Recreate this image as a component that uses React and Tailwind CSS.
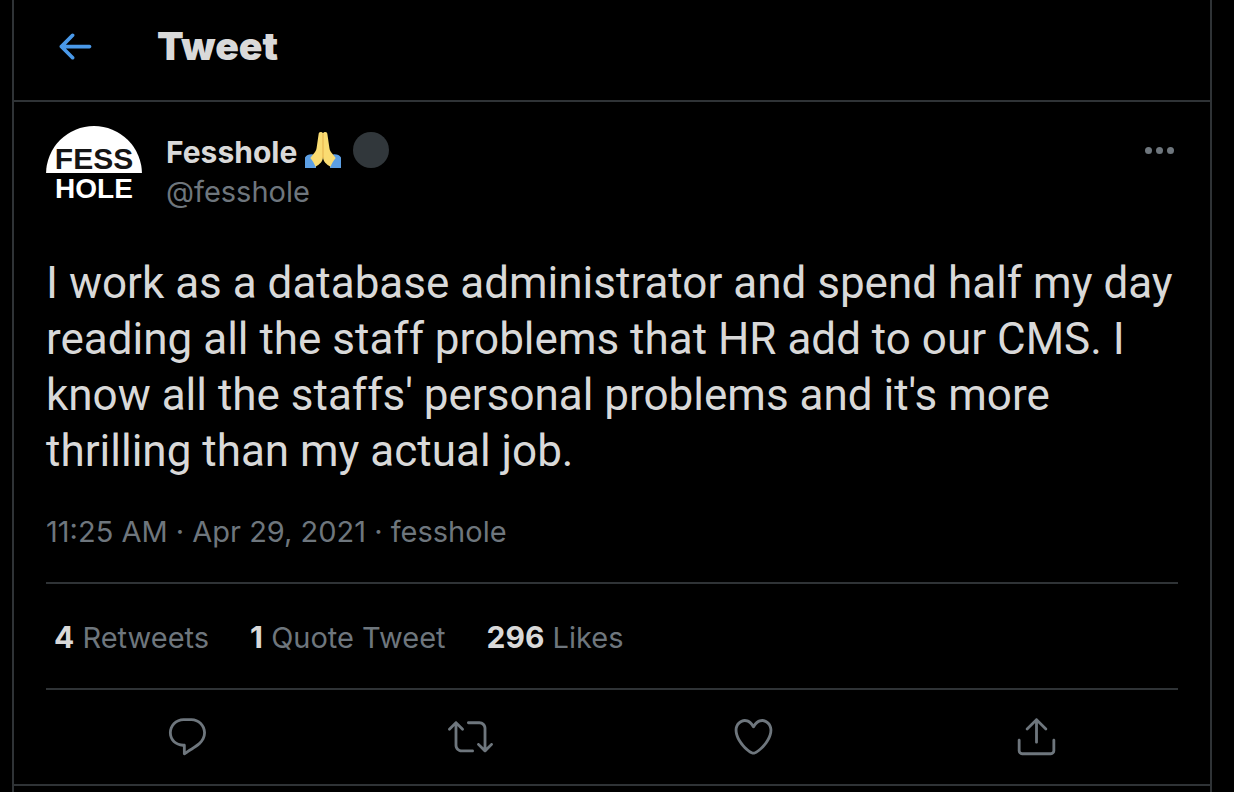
const ICONS = {
  back: 'M20 11H7.414l4.293-4.293c.39-.39.39-1.023 0-1.414s-1.023-.39-1.414 0l-6 6c-.39.39-.39 1.023 0 1.414l6 6c.195.195.45.293.707.293s.512-.098.707-.293c.39-.39.39-1.023 0-1.414L7.414 13H20c.553 0 1-.447 1-1s-.447-1-1-1z',
  reply:
    'M14.046 2.242l-4.148-.01h-.002c-4.374 0-7.8 3.427-7.8 7.802 0 4.098 3.186 7.206 7.465 7.37v3.828c0 .108.044.286.12.403.142.225.384.347.632.347.138 0 .277-.038.402-.118.264-.168 6.473-4.14 8.088-5.506 1.902-1.61 3.04-3.97 3.043-6.312v-.017c-.006-4.367-3.43-7.787-7.8-7.788zm3.787 12.972c-1.134.96-4.862 3.405-6.772 4.643V16.67c0-.414-.335-.75-.75-.75h-.396c-3.66 0-6.318-2.476-6.318-5.886 0-3.534 2.768-6.302 6.3-6.302l4.147.01h.002c3.532 0 6.3 2.766 6.302 6.296-.003 1.91-.942 3.844-2.514 5.176z',
  retweet:
    'M23.77 15.67c-.292-.293-.767-.293-1.06 0l-2.22 2.22V7.65c0-2.068-1.683-3.75-3.75-3.75h-5.85c-.414 0-.75.336-.75.75s.336.75.75.75h5.85c1.24 0 2.25 1.01 2.25 2.25v10.24l-2.22-2.22c-.293-.293-.768-.293-1.06 0s-.294.768 0 1.06l3.5 3.5c.145.147.337.22.53.22s.383-.072.53-.22l3.5-3.5c.294-.292.294-.767 0-1.06zm-10.66 3.28H7.26c-1.24 0-2.25-1.01-2.25-2.25V6.46l2.22 2.22c.148.147.34.22.532.22s.384-.073.53-.22c.293-.293.293-.768 0-1.06l-3.5-3.5c-.293-.294-.768-.294-1.06 0l-3.5 3.5c-.294.292-.294.767 0 1.06s.767.293 1.06 0l2.22-2.22V16.7c0 2.068 1.683 3.75 3.75 3.75h5.85c.414 0 .75-.336.75-.75s-.337-.75-.75-.75z',
  like: 'M12 21.638h-.014C9.403 21.59 1.95 14.856 1.95 8.478c0-3.064 2.525-5.754 5.403-5.754 2.29 0 3.83 1.58 4.646 2.73.814-1.148 2.354-2.73 4.645-2.73 2.88 0 5.404 2.69 5.404 5.755 0 6.376-7.454 13.11-10.037 13.157H12zM7.354 4.225c-2.08 0-3.903 1.988-3.903 4.255 0 5.74 7.034 11.596 8.55 11.658 1.518-.062 8.55-5.917 8.55-11.658 0-2.267-1.823-4.255-3.903-4.255-2.528 0-3.94 2.936-3.952 2.965-.23.562-1.156.562-1.387 0-.014-.03-1.425-2.965-3.954-2.965z',
  share:
    'M17.53 7.47l-5-5c-.293-.293-.768-.293-1.06 0l-5 5c-.294.293-.294.768 0 1.06s.767.294 1.06 0l3.72-3.72V15c0 .414.336.75.75.75s.75-.336.75-.75V4.81l3.72 3.72c.146.147.338.22.53.22s.384-.072.53-.22c.293-.293.293-.767 0-1.06zM19.708 21.944H4.292C3.028 21.944 2 20.916 2 19.652V14c0-.414.336-.75.75-.75s.75.336.75.75v5.652c0 .437.355.792.792.792h15.416c.437 0 .792-.355.792-.792V14c0-.414.336-.75.75-.75s.75.336.75.75v5.652c0 1.264-1.028 2.292-2.292 2.292z',
};

const stats = [
  { count: '4', label: 'Retweets' },
  { count: '1', label: 'Quote Tweet' },
  { count: '296', label: 'Likes' },
];

const actions = [
  { icon: 'reply', label: 'Reply' },
  { icon: 'retweet', label: 'Retweet' },
  { icon: 'like', label: 'Like' },
  { icon: 'share', label: 'Share' },
];

function Icon({ name }) {
  return (
    <svg viewBox="0 0 24 24" className="size-[45px] fill-current" aria-hidden="true">
      <path d={ICONS[name]} />
    </svg>
  );
}

function Avatar() {
  return (
    <a
      href="#profile"
      aria-label="Fesshole"
      className="block size-24 shrink-0 overflow-hidden rounded-full bg-black text-center font-['Liberation_Sans',sans-serif] font-bold"
    >
      <span className="flex h-[47px] items-end justify-center bg-white text-[30px] leading-7 text-[#151515]">
        FESS
      </span>
      <span className="block text-[28px] leading-8 text-white">HOLE</span>
    </a>
  );
}

function FoldedHands() {
  return (
    <svg viewBox="0 0 36 36" className="size-9" role="img" aria-label="Folded hands">
      <path
        fill="#5c9fe4"
        d="M0 36V25.5C1.500 23 4 22 7.200 22.200L11 24v12zM36 36V25.500C34.500 23 32 22 28.800 22.200L25 24v12z"
      />
      <path
        fill="#fadc72"
        d="M18 1.500C17.700.5 16.800 0 15.700 0c-1.200 0-2 .8-2.100 2.300L11.600 16c-.3 2.300-1.500 4.300-3.400 6.300L5.300 26c2.300 2.800 3.700 5.300 5.200 8.700C14.500 32.500 18 29.500 18 25c0 4.500 3.500 7.500 7.500 9.700 1.500-3.400 2.900-5.900 5.200-8.700l-2.900-3.700c-1.900-2-3.100-4-3.400-6.300L22.400 2.300C22.300.8 21.500 0 20.300 0c-1.100 0-2 .5-2.300 1.500z"
      />
      <path fill="none" stroke="#e5b04a" strokeWidth="1" d="M18 2v24" />
    </svg>
  );
}

export default function App() {
  return (
    <div className="min-h-screen bg-black pr-[22px] pl-3 font-[Inter,sans-serif] text-[#d9d9d9]">
      <main className="min-h-screen border-x-2 border-[#2f3336]">
        <header className="flex items-center gap-[60px] border-b-2 border-[#2f3336] pt-[18px] pr-8 pb-[26px] pl-[38px]">
          <button type="button" aria-label="Back" className="text-[#4a99e9]">
            <Icon name="back" />
          </button>
          <h1 className="text-[39px] leading-14 font-black">Tweet</h1>
        </header>

        <article className="border-b-2 border-[#2f3336] px-8 pt-6">
          <div className="flex items-start gap-6">
            <Avatar />
            <div className="min-w-0 flex-1 pt-1">
              <div className="flex items-center gap-2">
                <a href="#profile" className="text-[30px] leading-11 font-bold">
                  Fesshole
                </a>
                <span className="flex items-center gap-3 pb-1">
                  <FoldedHands />
                  <span className="size-9 rounded-full bg-[#31373b]" />
                </span>
              </div>
              <a href="#profile" className="block text-[29px] leading-9 text-[#6e767d]">
                @fesshole
              </a>
            </div>
            <button type="button" aria-label="More" className="flex h-12 items-center gap-1 pr-1 text-[#6e767d]">
              <span className="size-[7px] rounded-full bg-current" />
              <span className="size-[7px] rounded-full bg-current" />
              <span className="size-[7px] rounded-full bg-current" />
            </button>
          </div>

          <p className="mt-[33px] font-[Roboto,sans-serif] text-[44px] leading-14">
            I work as a database administrator and spend half my day reading all the staff problems that HR add to our
            CMS. I know all the staffs' personal problems and it's more thrilling than my actual job.
          </p>

          <p className="mt-[33px] border-b-2 border-[#2f3336] pb-[30px] text-[29px] leading-10 text-[#6e767d]">
            <a href="#status">11:25 AM · Apr 29, 2021</a> · <a href="#source">fesshole</a>
          </p>

          <div className="flex gap-[41px] border-b-2 border-[#2f3336] px-2 pt-[33px] pb-[30px] text-[29px] leading-10">
            {stats.map((stat) => (
              <a key={stat.label} href="#stats" className="text-[#6e767d]">
                <span className="text-[30px] font-bold text-[#d9d9d9]">{stat.count}</span> {stat.label}
              </a>
            ))}
          </div>

          <div className="grid grid-cols-4 pt-6 pb-[25px] text-[#6e767d]">
            {actions.map((action) => (
              <button key={action.label} type="button" aria-label={action.label} className="flex justify-center">
                <Icon name={action.icon} />
              </button>
            ))}
          </div>
        </article>
      </main>
    </div>
  );
}
